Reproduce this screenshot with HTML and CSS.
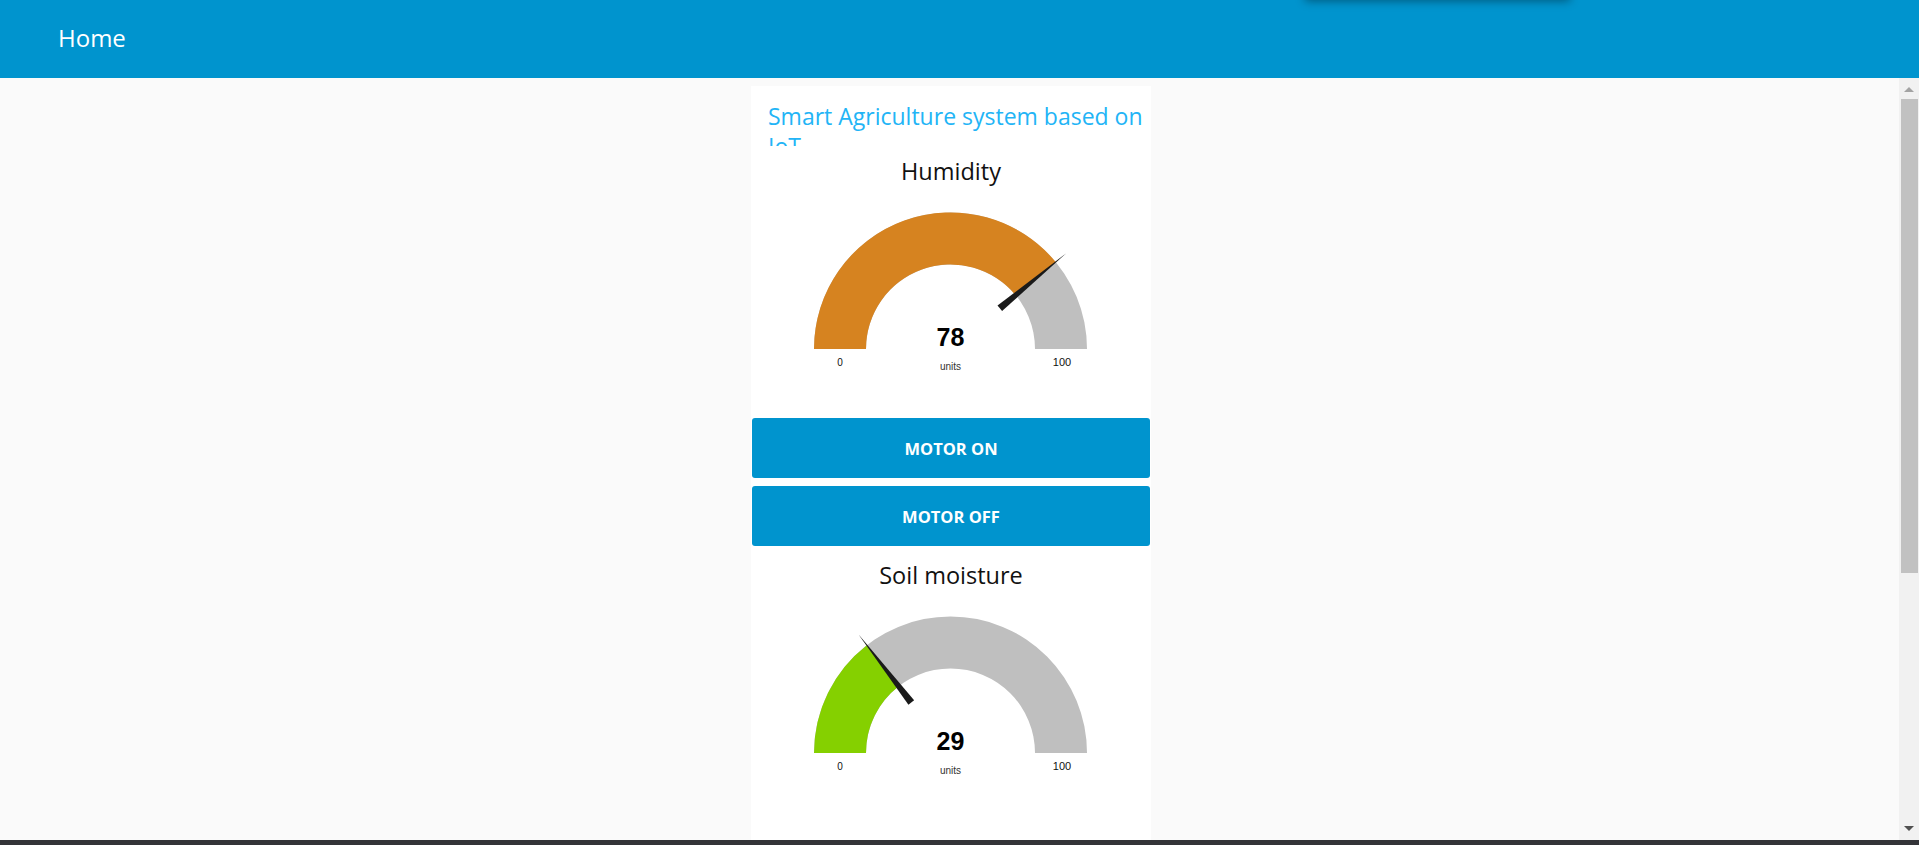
FILE: index.html
```html
<!DOCTYPE html>
<html lang="en">
<head>
<meta charset="utf-8">
<title>Home</title>
<link rel="stylesheet" href="styles.css">
</head>
<body>
<div class="app">
  <header class="topbar">
    <span class="topbar-title">Home</span>
  </header>
  <div class="toast-shadow"></div>
  <div class="viewport">
    <main class="content">
      <section class="card">
        <div class="group-title">Smart Agriculture system based on IoT</div>

        <svg class="gauge" width="400" height="264" viewBox="0 0 400 264">
          <text class="gauge-title" x="200" y="34">Humidity</text>
          <path class="gauge-bg" d="M63,203 A136.5,136.5 0 0 1 336,203 L284,203 A84.5,84.5 0 0 0 115,203 Z"/>
          <path class="gauge-fill-orange" d="M63,203 A136.5,136.5 0 0 1 304.67,116 L264.6,149.14 A84.5,84.5 0 0 0 115,203 Z"/>
          <polygon class="gauge-needle" points="64,-3.6 64,3.6 150,0" transform="translate(199.5 203) rotate(-39.6)"/>
          <text class="gauge-value" x="199.5" y="200">78</text>
          <text class="gauge-units" x="199.5" y="224">units</text>
          <text class="gauge-min" x="89" y="220">0</text>
          <text class="gauge-max" x="311" y="220">100</text>
        </svg>

        <div class="buttons">
          <button class="btn">MOTOR ON</button>
          <button class="btn">MOTOR OFF</button>
        </div>

        <svg class="gauge gauge-second" width="400" height="264" viewBox="0 0 400 264">
          <text class="gauge-title" x="200" y="34">Soil moisture</text>
          <path class="gauge-bg" d="M63,203 A136.5,136.5 0 0 1 336,203 L284,203 A84.5,84.5 0 0 0 115,203 Z"/>
          <path class="gauge-fill-green" d="M63,203 A136.5,136.5 0 0 1 115.84,95.14 L147.71,136.23 A84.5,84.5 0 0 0 115,203 Z"/>
          <polygon class="gauge-needle" points="64,-3.6 64,3.6 150,0" transform="translate(199.5 203) rotate(-127.8)"/>
          <text class="gauge-value" x="199.5" y="200">29</text>
          <text class="gauge-units" x="199.5" y="224">units</text>
          <text class="gauge-min" x="89" y="220">0</text>
          <text class="gauge-max" x="311" y="220">100</text>
        </svg>
      </section>
    </main>
    <div class="scrollbar">
      <div class="sb-btn sb-up"><span class="arrow-up"></span></div>
      <div class="sb-track"><div class="sb-thumb"></div></div>
      <div class="sb-btn sb-down"><span class="arrow-down"></span></div>
    </div>
  </div>
  <div class="taskbar"></div>
</div>
</body>
</html>
```

FILE: styles.css
```css
html, body {
  margin: 0;
  padding: 0;
  height: 100%;
  overflow: hidden;
}

body {
  font-family: "Open Sans", "Noto Sans", sans-serif;
  background: #fafafa;
}

.app {
  position: relative;
  display: flex;
  flex-direction: column;
  height: 845px;
  overflow: hidden;
}

.topbar {
  flex: 0 0 78px;
  height: 78px;
  background: #0094ce;
  display: flex;
  align-items: center;
  padding-left: 58px;
  box-sizing: border-box;
}

.topbar-title {
  color: #ffffff;
  font-size: 24px;
  line-height: 30px;
  margin-top: -2px;
}

.toast-shadow {
  position: absolute;
  top: -60px;
  left: 1305px;
  width: 265px;
  height: 60px;
  background: #0094ce;
  box-shadow: 0 1px 9px rgba(0, 0, 0, 0.4);
}

.viewport {
  flex: 0 0 762px;
  height: 762px;
  display: flex;
  flex-direction: row;
}

.content {
  flex: 1 1 auto;
  overflow: hidden;
  background: #fafafa;
  padding: 8px 0 0 3px;
  box-sizing: border-box;
}

.scrollbar {
  flex: 0 0 20px;
  width: 20px;
  display: flex;
  flex-direction: column;
  background: #f1f1f1;
}

.sb-btn {
  flex: 0 0 20px;
  height: 20px;
  display: flex;
  justify-content: center;
  align-items: center;
  box-sizing: border-box;
}

.sb-up {
  padding-top: 2px;
}

.sb-down {
  padding-bottom: 3px;
}

.arrow-up {
  width: 0;
  height: 0;
  border-left: 5px solid transparent;
  border-right: 5px solid transparent;
  border-bottom: 5px solid #a3a3a3;
}

.arrow-down {
  width: 0;
  height: 0;
  border-left: 5px solid transparent;
  border-right: 5px solid transparent;
  border-top: 5px solid #505050;
}

.sb-track {
  flex: 1 1 auto;
  padding: 1px 1px 0 2px;
}

.sb-thumb {
  height: 474px;
  background: #c1c1c1;
}

.card {
  width: 400px;
  min-height: 1154px;
  margin: 0 auto;
  background: #ffffff;
  display: flex;
  flex-direction: column;
}

.group-title {
  height: 60px;
  box-sizing: border-box;
  padding: 15px 0 0 17px;
  overflow: hidden;
  color: #22b4f6;
  font-size: 23px;
  line-height: 30px;
}

.gauge {
  display: block;
  flex: 0 0 264px;
}

.gauge-second {
  margin-top: 4px;
}

.gauge-title {
  font-family: "Open Sans", "Noto Sans", sans-serif;
  font-size: 23.5px;
  fill: #111111;
  text-anchor: middle;
}

.gauge-bg {
  fill: #bfbfbf;
}

.gauge-fill-orange {
  fill: #d68320;
}

.gauge-fill-green {
  fill: #85d000;
}

.gauge-needle {
  fill: #1a1a1a;
}

.gauge-value {
  font-family: "Liberation Sans", Arial, sans-serif;
  font-size: 25px;
  font-weight: bold;
  fill: #010101;
  text-anchor: middle;
}

.gauge-units {
  font-family: "Liberation Sans", Arial, sans-serif;
  font-size: 10px;
  fill: #333333;
  text-anchor: middle;
}

.gauge-min,
.gauge-max {
  font-family: "Liberation Sans", Arial, sans-serif;
  fill: #111111;
  text-anchor: middle;
}

.gauge-min {
  font-size: 10px;
}

.gauge-max {
  font-size: 11px;
}

.buttons {
  display: flex;
  flex-direction: column;
  gap: 8px;
  margin: 8px 1px 0;
}

.btn {
  height: 60px;
  border: none;
  border-radius: 3px;
  background: #0094ce;
  color: #ffffff;
  font-family: "Open Sans", "Noto Sans", sans-serif;
  font-size: 16.5px;
  font-weight: 700;
  padding: 0;
  cursor: pointer;
}

.taskbar {
  flex: 0 0 5px;
  height: 5px;
  background: #333438;
}
```
